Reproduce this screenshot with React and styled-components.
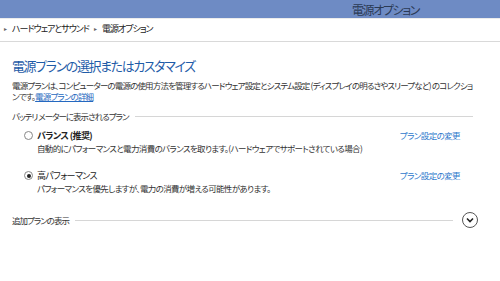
import styled, { createGlobalStyle } from 'styled-components';

const Global = createGlobalStyle`
  html, body {
    margin: 0;
    padding: 0;
    background: #fff;
  }
  body {
    width: 500px;
    height: 281px;
    overflow: hidden;
    font-family: "Noto Sans CJK JP", "Noto Sans", sans-serif;
    font-feature-settings: 'palt';
    color: #333;
  }
`;

const TitleBar = styled.div`
  height: 18px;
  background: #6e8bc4;
  display: flex;
  align-items: center;
  padding-left: 352px;
  font-size: 12px;
  color: #2b3a55;
  letter-spacing: -1.4px;
`;

const Crumbs = styled.div`
  border-top: 1px solid #ececec;
  border-bottom: 1px solid #d9d9d9;
  box-sizing: border-box;
  height: 24px;
  display: flex;
  align-items: center;
  gap: 5px;
  padding: 0 0 4px 4px;
  font-size: 9px;
  letter-spacing: -1px;
  color: #222;
`;

const Arrow = styled.span`
  font-size: 6px;
  color: #666;
  margin-right: 1px;
`;

const Content = styled.div`
  padding: 16px 0 0 12px;
`;

const Heading = styled.h1`
  margin: 0;
  font-size: 13px;
  font-weight: 400;
  color: #1f5ca8;
  line-height: 16px;
  letter-spacing: -1.4px;
`;

const Intro = styled.p`
  margin: 6px 0 0;
  font-size: 8.5px;
  line-height: 11px;
  white-space: nowrap;
  letter-spacing: -0.85px;
`;

const Link = styled.a`
  color: ${p => (p.$plain ? '#2e78cc' : '#2468c0')};
  text-decoration: ${p => (p.$plain ? 'none' : 'underline')};
  letter-spacing: ${p => (p.$plain ? '-0.6px' : 'inherit')};
  font-size: ${p => (p.$plain ? '8.5px' : 'inherit')};
  cursor: pointer;
`;

const Group = styled.div`
  display: flex;
  align-items: center;
  gap: 6px;
  margin-top: ${p => p.$top}px;
  padding-right: ${p => p.$right}px;
  height: 16px;
  font-size: 8.5px;
  color: #333;
  letter-spacing: -1px;
  &::after {
    content: '';
    flex: 1;
    height: 1px;
    background: #d6d6d6;
    order: 1;
  }
`;

const GroupLabel = styled.span`
  white-space: nowrap;
`;

const Toggle = styled.span`
  order: 2;
  width: 16px;
  height: 16px;
  border: 1px solid #555;
  border-radius: 50%;
  display: flex;
  align-items: center;
  justify-content: center;
  box-sizing: border-box;
  margin-left: 3px;
`;

const Plan = styled.div`
  margin-top: ${p => p.$top}px;
  padding-left: 12px;
  width: 436px;
`;

const PlanRow = styled.div`
  display: flex;
  align-items: center;
  font-size: 9px;
  letter-spacing: -0.6px;
  line-height: 13px;
`;

const Radio = styled.span`
  width: 9px;
  height: 9px;
  border: 1px solid #888;
  border-radius: 50%;
  box-sizing: border-box;
  margin-right: 4px;
  display: flex;
  align-items: center;
  justify-content: center;
  background: #fff;
  &::after {
    content: '';
    width: 4px;
    height: 4px;
    border-radius: 50%;
    background: ${p => (p.$on ? '#222' : 'transparent')};
  }
`;

const PlanName = styled.span`
  font-weight: ${p => (p.$bold ? 700 : 400)};
  color: #222;
  flex: 1;
`;

const PlanDesc = styled.div`
  padding-left: 13px;
  font-size: 8.5px;
  line-height: 13px;
  letter-spacing: -0.65px;
  white-space: nowrap;
`;

const plans = [
  {
    name: 'バランス (推奨)',
    desc: '自動的にパフォーマンスと電力消費のバランスを取ります。(ハードウェアでサポートされている場合)',
    on: false,
    bold: true,
    top: 5,
  },
  {
    name: '高パフォーマンス',
    desc: 'パフォーマンスを優先しますが、電力の消費が増える可能性があります。',
    on: true,
    bold: false,
    top: 14,
  },
];

const App = () => {
  return (
    <>
      <Global />
      <TitleBar>電源オプション</TitleBar>
      <Crumbs>
        <Arrow>▸</Arrow>
        <span>ハードウェアとサウンド</span>
        <Arrow>▸</Arrow>
        <span>電源オプション</span>
      </Crumbs>
      <Content>
        <Heading>電源プランの選択またはカスタマイズ</Heading>
        <Intro>
          電源プランは、コンピューターの電源の使用方法を管理するハードウェア設定とシステム設定 (ディスプレイの明るさやスリープなど) のコレクショ
          <br />
          ンです。<Link>電源プランの詳細</Link>
        </Intro>
        <Group $top={6} $right={27}>
          <GroupLabel>バッテリ メーターに表示されるプラン</GroupLabel>
        </Group>
        {plans.map(p => (
          <Plan key={p.name} $top={p.top}>
            <PlanRow>
              <Radio $on={p.on} />
              <PlanName $bold={p.bold}>{p.name}</PlanName>
              <Link $plain>プラン設定の変更</Link>
            </PlanRow>
            <PlanDesc>{p.desc}</PlanDesc>
          </Plan>
        ))}
        <Group $top={17} $right={22}>
          <GroupLabel>追加プランの表示</GroupLabel>
          <Toggle>
            <svg width="8" height="6" viewBox="0 0 8 6">
              <path d="M1 1.5 L4 4.5 L7 1.5" fill="none" stroke="#222" strokeWidth="1.6" />
            </svg>
          </Toggle>
        </Group>
      </Content>
    </>
  );
};

export default App;
